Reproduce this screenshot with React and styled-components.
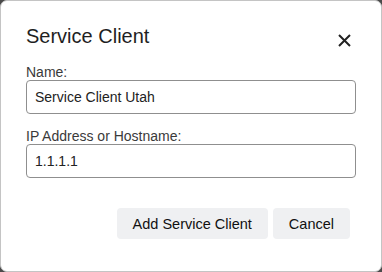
import React from "react";
import styled, { createGlobalStyle } from "styled-components";

const Global = createGlobalStyle`
  html, body { margin: 0; padding: 0; background: #4a4a4a; }
  body { font-family: "Liberation Sans", Arial, sans-serif; }
  * { box-sizing: border-box; }
`;

const Dialog = styled.div`
  width: 382px;
  height: 272px;
  background: #ffffff;
  border: 1px solid #c4c4c4;
  border-radius: 7px;
  padding: 23px 25px 0 25px;
  display: flex;
  flex-direction: column;
`;

const Header = styled.div`
  display: flex;
  align-items: center;
  justify-content: space-between;
  height: 24px;
  margin-bottom: 16px;
`;

const Title = styled.h2`
  margin: 0;
  font-size: 20px;
  line-height: 24px;
  font-weight: 400;
  color: #1f1f1f;
`;

const Close = styled.button`
  border: 0;
  background: transparent;
  padding: 0;
  width: 14px;
  height: 14px;
  margin: 8px 5px 0 0;
  display: flex;
  align-items: center;
  justify-content: center;
  cursor: pointer;
`;

const Field = styled.div`
  display: flex;
  flex-direction: column;
  margin-top: ${(p) => (p.$first ? 0 : 14)}px;
`;

const Label = styled.label`
  font-size: 14px;
  line-height: 16px;
  color: #3a3a3a;
`;

const Input = styled.input`
  height: 34px;
  border: 1px solid #8f8f8f;
  border-radius: 4px;
  padding: 0 8px;
  font-family: "Liberation Sans", Arial, sans-serif;
  font-size: 14px;
  color: #222;
  outline: none;
`;

const Footer = styled.div`
  display: flex;
  justify-content: flex-end;
  gap: 5px;
  margin-top: 30px;
  padding-right: 6px;
`;

const Button = styled.button`
  height: 31px;
  padding: 0 16px;
  border: 0;
  border-radius: 4px;
  background: #eff0f2;
  font-family: "Liberation Sans", Arial, sans-serif;
  font-size: 14.5px;
  color: #111;
  cursor: pointer;
`;

export default function App() {
  return (
    <>
      <Global />
      <Dialog>
        <Header>
          <Title>Service Client</Title>
          <Close aria-label="Close">
            <svg width="13" height="13" viewBox="0 0 13 13">
              <path d="M1 1 L12 12 M12 1 L1 12" stroke="#222" strokeWidth="2" strokeLinecap="butt" />
            </svg>
          </Close>
        </Header>
        <Field $first>
          <Label>Name:</Label>
          <Input defaultValue="Service Client Utah" />
        </Field>
        <Field>
          <Label>IP Address or Hostname:</Label>
          <Input defaultValue="1.1.1.1" />
        </Field>
        <Footer>
          <Button>Add Service Client</Button>
          <Button>Cancel</Button>
        </Footer>
      </Dialog>
    </>
  );
}
